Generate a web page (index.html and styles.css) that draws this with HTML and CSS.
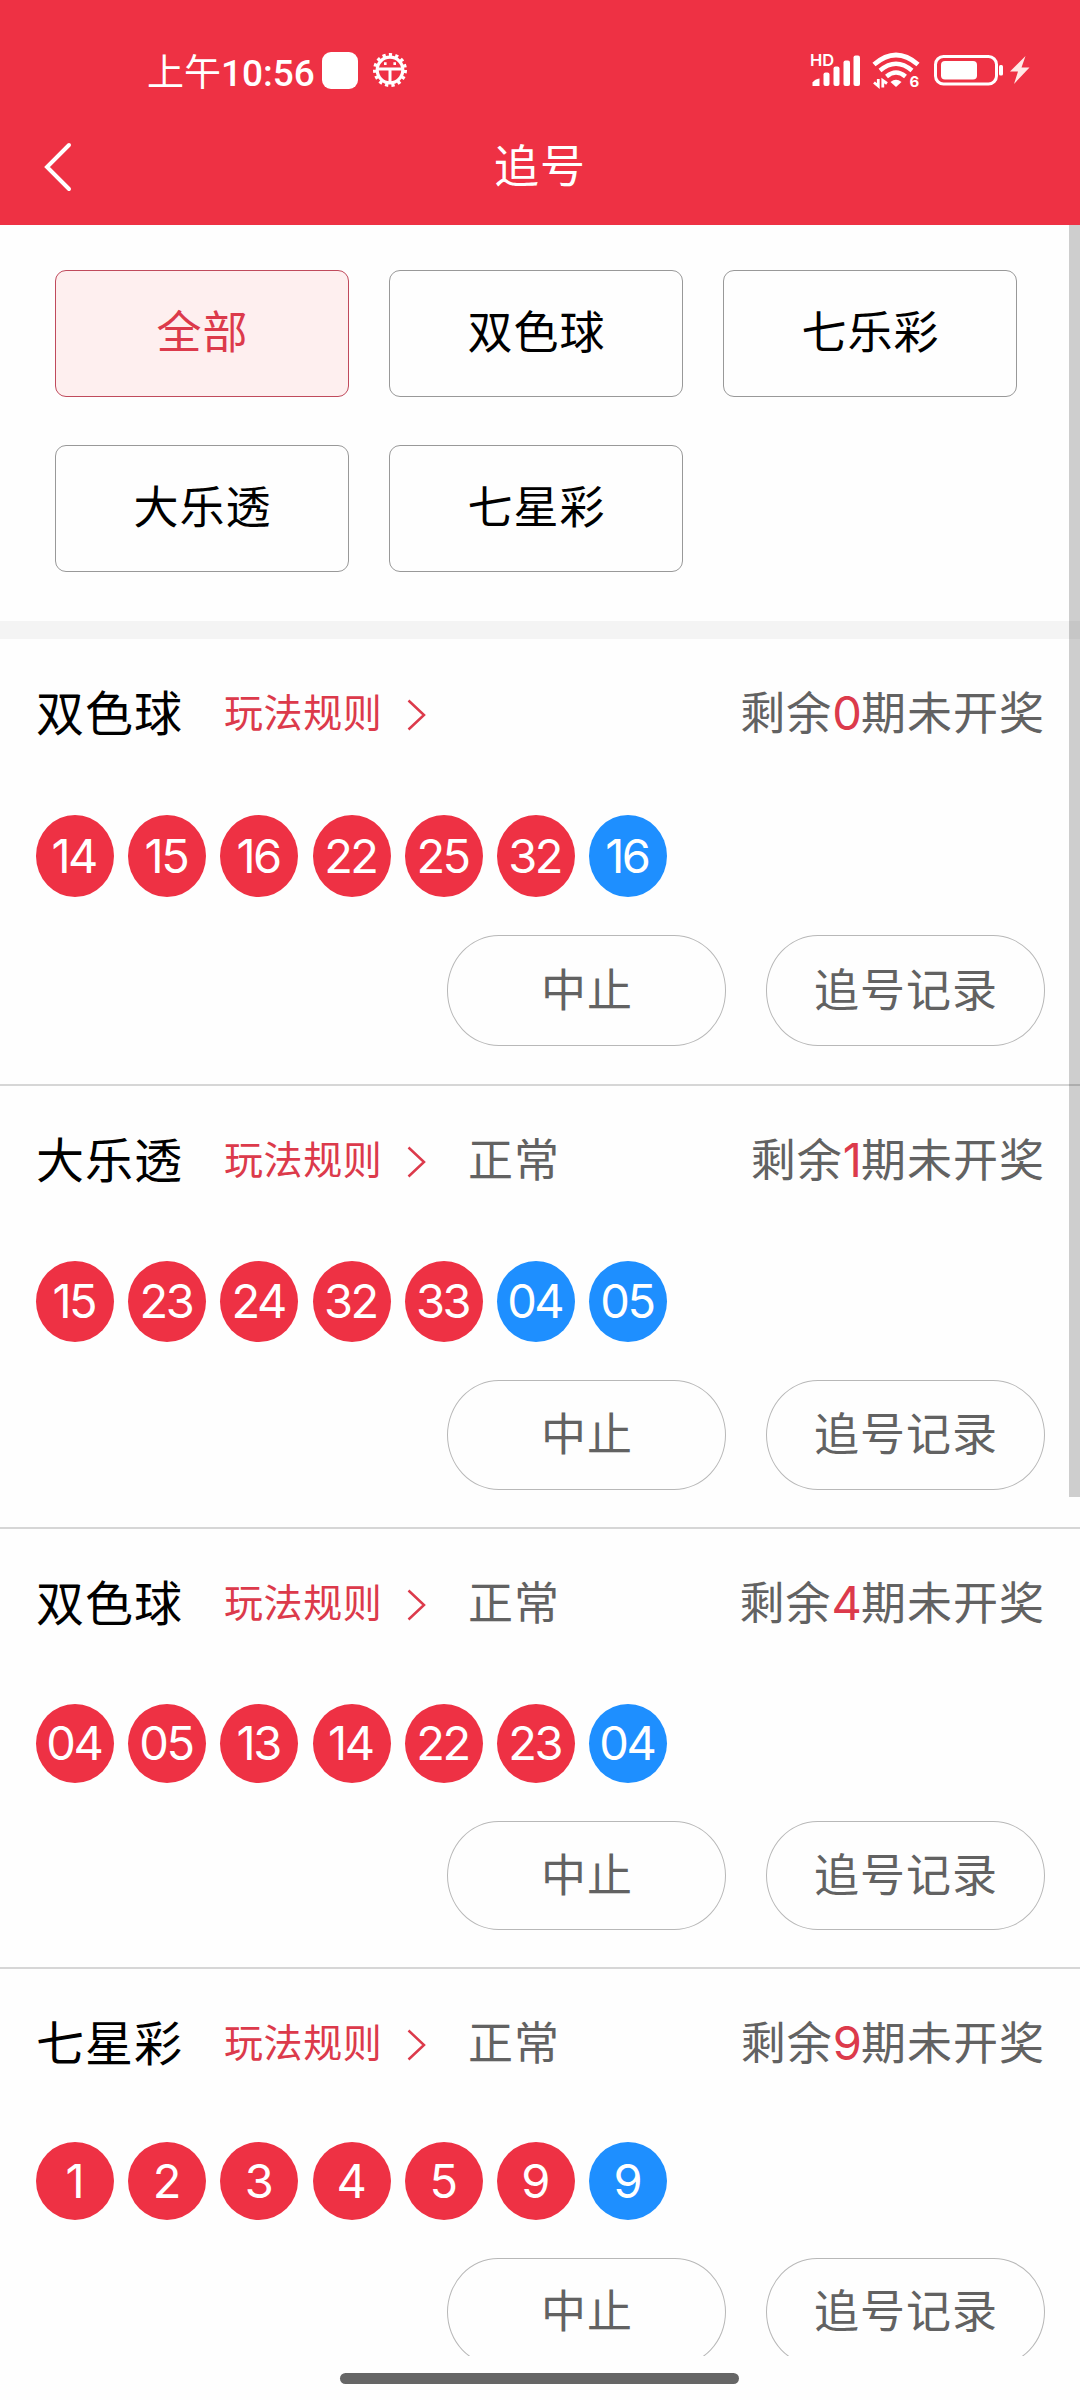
FILE: index.html
```html
<!DOCTYPE html>
<html lang="zh-CN">
  <head>
    <meta charset="utf-8" />
    <title>追号</title>
    <link rel="stylesheet" href="styles.css" />
  </head>
  <body>
    <header class="header">
      <div class="status">
        <div class="status-left">
          <span class="time">上午<b>10:56</b></span>
          <i class="square"></i>
          <svg class="gear" width="36" height="36" viewBox="-18 -18 36 36" fill="none" stroke="#fff">
            <circle r="12.8" stroke-width="3.2" />
            <circle r="15.2" stroke-width="3.6" stroke-dasharray="3.2 3.167" />
            <path d="M-12 -1H12M0 -1V12" stroke-width="3" />
            <path d="M-6 -6.4h2.600M3.400 -6.4h2.600" stroke-width="2.600" />
          </svg>
        </div>
        <div class="status-right">
          <svg width="52" height="48" viewBox="0 -6 52 48" fill="#fff">
            <text x="0" y="14" class="hd">HD</text>
            <path d="M2.5 34V30.500Q5 27 9.500 26.500V34Z" />
            <rect x="13.500" y="20.500" width="6" height="13.500" rx="2" />
            <rect x="23.500" y="14.500" width="6" height="19.500" rx="2" />
            <rect x="33.500" y="8.500" width="6.500" height="25.500" rx="2" />
            <rect x="43.500" y="3.500" width="6.500" height="30.500" rx="2" />
          </svg>
          <svg class="wifi" width="48" height="48" viewBox="0 -6 48 48" fill="none" stroke="#fff">
            <path d="M2 12.500Q24 -6.500 46 12.500" stroke-width="4.800" />
            <path d="M8 18.500Q24 5 40 18.500" stroke-width="4.500" />
            <path d="M14.500 24.500Q24 16.500 33.500 24.500" stroke-width="4.500" />
            <path d="M18.500 30Q24 25.500 29.500 30L24 35Z" fill="#fff" stroke="none" />
            <path d="M6.300 27V34L2 30.500M10.800 35.500V28.500L15 31.500" stroke-width="2.800" />
            <text x="37.500" y="35" class="six">6</text>
          </svg>
          <svg class="battery" width="70" height="32" viewBox="0 0 70 32" fill="none" stroke="#fff">
            <rect x="1.500" y="2.500" width="61" height="27.500" rx="8" stroke-width="3" />
            <rect x="7" y="7" width="36" height="18.500" rx="4" fill="#fff" stroke="none" />
            <rect x="65" y="11" width="4" height="10.500" rx="1.500" fill="#fff" stroke="none" />
          </svg>
          <svg class="bolt" width="20" height="30" viewBox="0 0 20 30" fill="#ffe9e6">
            <path d="M15.500 1L0 16.500H8L4 29L19.500 12.500H11.500Z" />
          </svg>
        </div>
      </div>
      <div class="nav">
        <svg class="back" width="30" height="52" viewBox="0 0 30 52" fill="none" stroke="#fff" stroke-width="4" stroke-linecap="round">
          <path d="M26 4L4 26L26 48" />
        </svg>
        <h1>追号</h1>
      </div>
    </header>

    <main class="page">
      <div class="filters">
        <button class="filter active">全部</button>
        <button class="filter">双色球</button>
        <button class="filter">七乐彩</button>
        <button class="filter">大乐透</button>
        <button class="filter">七星彩</button>
      </div>

      <section class="item first">
        <div class="head">
          <h2>双色球</h2>
          <a class="rule">玩法规则</a>
          <svg class="arrow" width="19" height="32" viewBox="0 0 19 32"><path d="M1.500 1.500L17 16L1.500 30.500" /></svg>
          <span class="left">剩余<em>0</em>期未开奖</span>
        </div>
        <div class="balls">
          <span>14</span><span>15</span><span>16</span><span>22</span><span>25</span><span>32</span><span class="blue">16</span>
        </div>
        <div class="actions"><button>中止</button><button>追号记录</button></div>
      </section>

      <section class="item second">
        <div class="head">
          <h2>大乐透</h2>
          <a class="rule">玩法规则</a>
          <svg class="arrow" width="19" height="32" viewBox="0 0 19 32"><path d="M1.500 1.500L17 16L1.500 30.500" /></svg>
          <span class="state">正常</span>
          <span class="left">剩余<em>1</em>期未开奖</span>
        </div>
        <div class="balls">
          <span>15</span><span>23</span><span>24</span><span>32</span><span>33</span><span class="blue">04</span><span class="blue">05</span>
        </div>
        <div class="actions"><button>中止</button><button>追号记录</button></div>
      </section>

      <section class="item third">
        <div class="head">
          <h2>双色球</h2>
          <a class="rule">玩法规则</a>
          <svg class="arrow" width="19" height="32" viewBox="0 0 19 32"><path d="M1.500 1.500L17 16L1.500 30.500" /></svg>
          <span class="state">正常</span>
          <span class="left">剩余<em>4</em>期未开奖</span>
        </div>
        <div class="balls">
          <span>04</span><span>05</span><span>13</span><span>14</span><span>22</span><span>23</span><span class="blue">04</span>
        </div>
        <div class="actions"><button>中止</button><button>追号记录</button></div>
      </section>

      <section class="item fourth">
        <div class="head">
          <h2>七星彩</h2>
          <a class="rule">玩法规则</a>
          <svg class="arrow" width="19" height="32" viewBox="0 0 19 32"><path d="M1.500 1.500L17 16L1.500 30.500" /></svg>
          <span class="state">正常</span>
          <span class="left">剩余<em>9</em>期未开奖</span>
        </div>
        <div class="balls">
          <span>1</span><span>2</span><span>3</span><span>4</span><span>5</span><span>9</span><span class="blue">9</span>
        </div>
        <div class="actions"><button>中止</button><button>追号记录</button></div>
      </section>
      <i class="scrollbar"></i>
    </main>

    <footer class="home"><i></i></footer>
  </body>
</html>
```
FILE: styles.css
```css
:root {
  --red: #ee3144;
  --text-red: #dc3a4b;
  --blue: #1e8fff;
  --gray: #626262;
}

* {
  margin: 0;
  padding: 0;
  box-sizing: border-box;
}

body {
  width: 1080px;
  height: 2400px;
  overflow: hidden;
  background: #fefefe;
  font-family: "Noto Sans CJK SC", sans-serif;
  font-size: 45px;
  letter-spacing: 1px;
}

button {
  font: inherit;
  letter-spacing: inherit;
  background: none;
}

svg {
  display: block;
  flex: none;
}

/* header */
.header {
  height: 225px;
  background: var(--red);
  color: #fff;
}

.status {
  height: 140px;
  padding: 0 50px 0 147px;
  display: flex;
  justify-content: space-between;
  align-items: center;
}

.status-left,
.status-right {
  display: flex;
  align-items: center;
}

.time {
  width: 175px;
  padding-top: 3px;
  font-size: 37px;
  font-weight: 400;
  letter-spacing: 0;
  line-height: 50px;
  white-space: nowrap;
}

.time b {
  font-family: Roboto, sans-serif;
  font-size: 37px;
  font-weight: 500;
}

.square {
  width: 36px;
  height: 37px;
  border-radius: 9px;
  background: #fff;
}

.gear {
  margin-left: 14px;
}

.hd,
.six {
  font-family: Inter, sans-serif;
  font-size: 16.500px;
  font-weight: 600;
  letter-spacing: 0;
  stroke: none;
  fill: #fff;
}

.six {
  font-size: 15px;
  font-weight: 700;
}

.wifi {
  margin-left: 10px;
}

.battery {
  margin-left: 14px;
}

.bolt {
  margin-left: 6px;
}

.nav {
  height: 46px;
  padding: 0 43px;
  display: grid;
  grid-template-columns: 30px 1fr 30px;
  align-items: center;
}

.back {
  margin-top: -4px;
}

.nav h1 {
  font-weight: 400;
  font-size: 45px;
  line-height: 48px;
  padding-bottom: 9px;
  text-align: center;
}

/* content */
.page {
  position: relative;
  height: 2131px;
  overflow: hidden;
}

.scrollbar {
  position: absolute;
  top: 0;
  right: 0;
  width: 11px;
  height: 1272px;
  background: rgba(0, 0, 0, 0.19);
}

.filters {
  height: 414px;
  padding: 45px 62px 0 55px;
  border-bottom: 18px solid #f4f4f4;
  display: grid;
  grid-template-columns: repeat(3, 294px);
  grid-auto-rows: 127px;
  align-content: start;
  gap: 48px 40px;
}

.filter {
  border: 1px solid #999;
  border-radius: 11px;
  padding: 0 0 8px 1px;
  color: #000;
}

.filter.active {
  color: var(--text-red);
  border-color: #c04a5c;
  background: #feefef;
}

.item {
  --ball: 82px;
  --btn: 111px;
  --gap: 34px;
  height: 447px;
  padding: 0 35px 0 36px;
  border-bottom: 2px solid #d6d6d6;
}

.second {
  --ball: 81px;
  --btn: 110px;
  --gap: 33px;
  height: 443px;
}

.third {
  --ball: 79px;
  --btn: 109px;
  --gap: 33px;
  height: 440px;
}

.fourth {
  --ball: 78px;
  --btn: 108px;
  --gap: 31px;
}

.head {
  height: 142px;
  display: flex;
  align-items: center;
  color: var(--gray);
  white-space: nowrap;
}

.head h2 {
  width: 188px;
  font-size: 48px;
  font-weight: 400;
  color: #000;
}

.rule {
  width: 183px;
  font-size: 39px;
  letter-spacing: 0.600px;
  color: var(--text-red);
}

.arrow {
  margin-top: 9px;
  fill: none;
  stroke: var(--text-red);
  stroke-width: 2.500;
}

.state {
  margin-left: 42px;
}

.left {
  margin-left: auto;
}

.left em {
  font-family: Inter, sans-serif;
  font-style: normal;
  font-size: 47px;
  letter-spacing: -1px;
  color: var(--text-red);
}

.balls {
  margin-top: var(--gap);
  display: flex;
  gap: 14.200px;
}

.balls span {
  width: 78px;
  height: var(--ball);
  border-radius: 50%;
  background: var(--red);
  color: #fff;
  font-family: Inter, sans-serif;
  font-size: 47px;
  letter-spacing: -2.500px;
  text-indent: -2.500px;
  line-height: calc(var(--ball) - 1px);
  text-align: center;
}

.balls .blue {
  background: var(--blue);
}

.actions {
  margin-top: 38px;
  display: flex;
  justify-content: flex-end;
  gap: 40px;
}

.actions button {
  width: 279px;
  height: var(--btn);
  padding: 0 0 7px 1px;
  border: 1px solid #b8b8b8;
  border-radius: 52px / 55px;
  color: var(--gray);
}

.home {
  height: 44px;
  padding: 17px 2px 0 0;
}

.home i {
  display: block;
  width: 399px;
  height: 11px;
  margin: 0 auto;
  border-radius: 6px;
  background: #666;
}
```
